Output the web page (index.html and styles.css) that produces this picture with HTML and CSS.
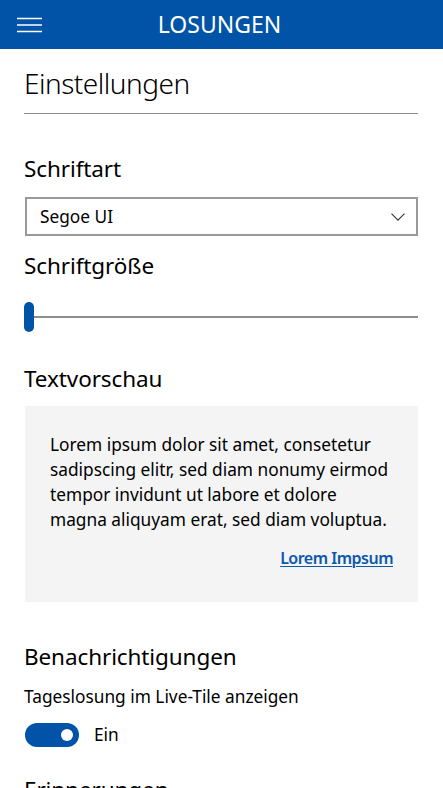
FILE: index.html
```html
<!DOCTYPE html>
<html lang="de">
<head>
<meta charset="utf-8">
<title>Losungen – Einstellungen</title>
<link rel="stylesheet" href="styles.css">
</head>
<body>
<header class="appbar">
  <button class="menu-btn" aria-label="Menü">
    <svg width="25" height="16" viewBox="0 0 25 16"><path d="M0 1.5H25M0 8H25M0 14.5H25" stroke="#fff" stroke-width="1.4" fill="none"/></svg>
  </button>
  <div class="appbar-title">LOSUNGEN</div>
  <div class="appbar-spacer"></div>
</header>
<main class="content">
  <h1 class="page-title">Einstellungen</h1>

  <h2 class="section-title first">Schriftart</h2>
  <div class="dropdown">
    <span class="dropdown-value">Segoe UI</span>
    <svg class="chevron" width="14" height="8" viewBox="0 0 14 8"><path d="M0.5 0.7L7 7.2L13.5 0.7" stroke="#333" stroke-width="1.1" fill="none"/></svg>
  </div>

  <h2 class="section-title size-title">Schriftgröße</h2>
  <div class="slider">
    <div class="slider-thumb"></div>
    <div class="slider-track"></div>
  </div>

  <h2 class="section-title preview-title">Textvorschau</h2>
  <div class="preview">
    <p class="preview-text">Lorem ipsum dolor sit amet, consetetur sadipscing elitr, sed diam nonumy eirmod tempor invidunt ut labore et dolore magna aliquyam erat, sed diam voluptua.</p>
    <div class="preview-link-row"><a class="preview-link" href="#">Lorem Impsum</a></div>
  </div>

  <h2 class="section-title notify-title">Benachrichtigungen</h2>
  <div class="setting-label">Tageslosung im Live-Tile anzeigen</div>
  <div class="toggle-row">
    <div class="toggle"><div class="toggle-knob"></div></div>
    <span class="toggle-text">Ein</span>
  </div>

  <h2 class="section-title remind-title">Erinnerungen</h2>
</main>
</body>
</html>
```

FILE: styles.css
```css
html, body {
  margin: 0;
  padding: 0;
  background: #fff;
  overflow: hidden;
}
body {
  font-family: "Noto Sans", "Open Sans", sans-serif;
  color: #000;
  height: 788px;
}
.appbar {
  height: 49px;
  background: #0053a6;
  display: grid;
  grid-template-columns: 1fr auto 1fr;
  align-items: center;
}
.menu-btn {
  background: none;
  border: 0;
  padding: 0 0 0 17px;
  margin: 0;
  display: flex;
  align-items: center;
  height: 49px;
  justify-self: start;
}
.appbar-title {
  color: #fff;
  font-size: 23px;
  line-height: 49px;
  font-weight: 400;
  margin-right: 4px;
}
.content {
  padding: 0 25px 0 24px;
}
.page-title {
  margin: 16px 0 0;
  font-size: 28px;
  letter-spacing: -0.5px;
  line-height: 36px;
  font-weight: 300;
  padding-bottom: 12px;
  border-bottom: 1px solid #8c8c8c;
}
.section-title {
  margin: 0;
  font-size: 22.5px;
  line-height: 30px;
  font-weight: 400;
  letter-spacing: -0.1px;
}
.section-title.first { margin-top: 40px; }
.dropdown {
  margin: 13px 0 0 1px;
  height: 35px;
  border: 2px solid #999;
  display: flex;
  align-items: center;
  justify-content: space-between;
  padding: 0 11px 0 13px;
}
.dropdown-value {
  font-size: 17.3px;
  line-height: 35px;
}
.section-title.size-title { margin-top: 15px; }
.slider {
  margin-top: 21px;
  height: 30px;
  display: flex;
  align-items: center;
}
.slider-thumb {
  width: 10px;
  height: 30px;
  border-radius: 5px;
  background: #0053a6;
}
.slider-track {
  flex: 1;
  height: 2px;
  background: #8e8e8e;
}
.section-title.preview-title { margin-top: 32px; }
.preview {
  margin: 12px 0 0 1px;
  background: #f4f4f4;
  padding: 26px 25px 31px 25px;
}
.preview-text {
  margin: 0;
  font-size: 17.3px;
  line-height: 25px;
}
.preview-link-row {
  margin-top: 14px;
  display: flex;
  justify-content: flex-end;
}
.preview-link {
  font-size: 16px;
  font-weight: 600;
  letter-spacing: -0.5px;
  line-height: 25px;
  color: #0a58b0;
  text-decoration: underline;
  text-decoration-thickness: 1px;
  text-underline-offset: 2px;
}
.section-title.notify-title { margin-top: 40px; }
.setting-label {
  margin-top: 12px;
  font-size: 17.3px;
  line-height: 25px;
}
.toggle-row {
  margin-top: 13px;
  display: flex;
  align-items: center;
  gap: 15px;
}
.toggle {
  margin-left: 1px;
  width: 54px;
  height: 24px;
  border-radius: 12px;
  background: #0053a6;
  display: flex;
  align-items: center;
  justify-content: flex-end;
  padding-right: 6px;
  box-sizing: border-box;
}
.toggle-knob {
  width: 12px;
  height: 12px;
  border-radius: 50%;
  background: #fff;
}
.toggle-text {
  font-size: 17.3px;
  line-height: 25px;
}
.section-title.remind-title { margin-top: 28px; }
```
